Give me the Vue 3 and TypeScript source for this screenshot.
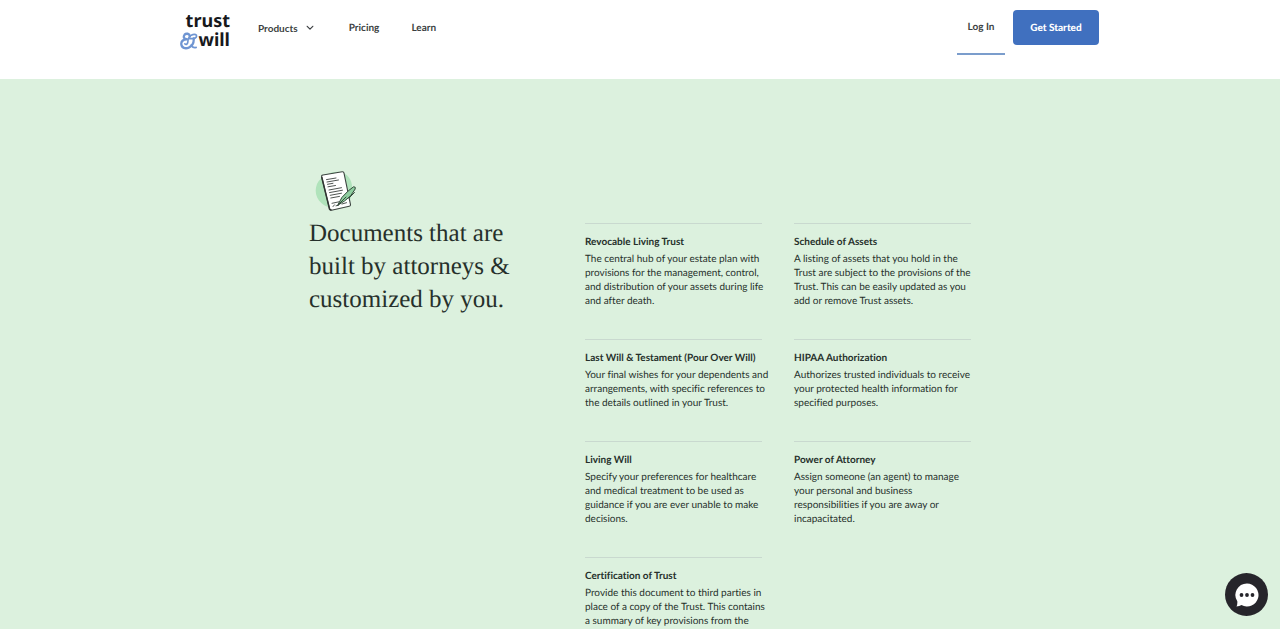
<script setup lang="ts">
interface DocumentItem {
  title: string
  lines: string[]
}

const documents: DocumentItem[] = [
  {
    title: 'Revocable Living Trust',
    lines: [
      'The central hub of your estate plan with',
      'provisions for the management, control,',
      'and distribution of your assets during life',
      'and after death.',
    ],
  },
  {
    title: 'Schedule of Assets',
    lines: [
      'A listing of assets that you hold in the',
      'Trust are subject to the provisions of the',
      'Trust. This can be easily updated as you',
      'add or remove Trust assets.',
    ],
  },
  {
    title: 'Last Will & Testament (Pour Over Will)',
    lines: [
      'Your final wishes for your dependents and',
      'arrangements, with specific references to',
      'the details outlined in your Trust.',
    ],
  },
  {
    title: 'HIPAA Authorization',
    lines: [
      'Authorizes trusted individuals to receive',
      'your protected health information for',
      'specified purposes.',
    ],
  },
  {
    title: 'Living Will',
    lines: [
      'Specify your preferences for healthcare',
      'and medical treatment to be used as',
      'guidance if you are ever unable to make',
      'decisions.',
    ],
  },
  {
    title: 'Power of Attorney',
    lines: [
      'Assign someone (an agent) to manage',
      'your personal and business',
      'responsibilities if you are away or',
      'incapacitated.',
    ],
  },
  {
    title: 'Certification of Trust',
    lines: [
      'Provide this document to third parties in',
      'place of a copy of the Trust. This contains',
      'a summary of key provisions from the',
    ],
  },
]
</script>

<template>
  <div class="page">
    <header class="header">
      <div class="bar">
        <a class="logo" href="#" aria-label="trust &amp; will">
          <span class="logo-top">trust</span>
          <span class="logo-bottom">
            <svg class="ampersand" viewBox="0 0 20 18" preserveAspectRatio="none" aria-hidden="true">
              <g fill="none" stroke="#6f95d2" stroke-linecap="round" stroke-linejoin="round">
                <path stroke-width="2.5" d="M11 4.600C10.600 1.500 6.800.9 5.100 2.700C3.200 4.900 4.600 7.300 7.600 7.300C3.200 7.300 1.200 9.600 1.400 12.100C1.700 15.900 6 17 9.700 15.600C13.500 14 15.600 10.500 15.200 6.500" />
                <path stroke-width="1.800" d="M5.400 11.900C7 13.200 8.900 11.600 8.800 9.300C8.700 6.200 11 3.400 14.200 2.600C16.500 2 18.800 2.600 18.400 4.300C18 6.300 14 6.900 10.600 6.500M12.500 13C13.800 15.400 15.500 16.200 18 15.400" />
              </g>
            </svg>
            <span>will</span>
          </span>
        </a>
        <nav class="nav" aria-label="Main">
          <button class="nav-item products" type="button">
            Products
            <svg class="chevron" viewBox="0 0 8 6" aria-hidden="true">
              <path d="M1.200 1.300L4 4.200L6.800 1.300" fill="none" stroke="#3c3f42" stroke-width="1.200" stroke-linecap="round" stroke-linejoin="round" />
            </svg>
          </button>
          <a class="nav-item" href="#">Pricing</a>
          <a class="nav-item" href="#">Learn</a>
        </nav>
        <div class="actions">
          <a class="login" href="#">Log In</a>
          <a class="start" href="#">Get Started</a>
        </div>
      </div>
    </header>

    <main class="section">
      <div class="content">
        <div class="intro">
          <svg class="paper" viewBox="0 0 42 42" aria-hidden="true">
            <path d="M2 14C6 6 16 1 25 2C33 3 38 11 37 20C37 31 31 38 20 38C7 38-3 27 2 14Z" fill="#b0e3bb" />
            <path d="M6.700 6.800Q6.200 5.300 7.900 5L27.200 1.800Q28.800 1.600 29 3.100L35.500 34.600Q35.700 36 34.200 36.300L16.500 40.200Q14.900 40.600 14.600 39.100Z" fill="#fff" stroke="#3d4541" stroke-width="1.100" stroke-linejoin="round" />
            <path d="M6.700 7L14.600 39.200L16.500 40.200" fill="none" stroke="#313633" stroke-width="1.500" />
            <g fill="none" stroke="#505653" stroke-width="1" stroke-linecap="round">
              <path d="M11.500 9.600L21 8M12 12L23.500 10M12.500 14.300L18 13.300M13 16.800L20.500 15.500M14 20L26.500 17.700M14.500 22.600L27.500 20.200M15.200 25.300L26.500 23.200M15.800 28L24.500 26.400" />
              <path d="M17 33.300L24 31.800M18 36.600L19.500 34.800M21 35.800L23.500 35.200M27 34L31.500 32.700" />
            </g>
            <path d="M22.500 35.500L27 27.300Q33.500 20 38.500 16.800Q41 16.500 40.200 19Q36.500 26.500 29.500 31Z" fill="#8fcfa0" stroke="#344a3b" stroke-width="1" stroke-linejoin="round" />
            <path d="M22.500 35.500L31 27M34 28L39.500 22.500" fill="none" stroke="#344a3b" stroke-width="1" stroke-linecap="round" />
          </svg>
          <h1 class="heading">Documents that are built by attorneys &amp; customized by you.</h1>
        </div>
        <div class="cards">
          <article v-for="item in documents" :key="item.title" class="card">
            <h2 class="card-title">{{ item.title }}</h2>
            <p class="card-text">{{ item.lines.join('\n') }}</p>
          </article>
        </div>
      </div>
    </main>

    <button class="chat" type="button" aria-label="Open chat">
      <svg class="bubble" viewBox="0 0 24 24" aria-hidden="true">
        <path d="M12 .5A11.500 11.500 0 1 1 6.500 22.100Q4.500 23.500 1.500 23.500Q2.600 21.500 2.300 18.300A11.500 11.500 0 0 1 12 .5Z" fill="#fff" />
        <g fill="#26252b">
          <circle cx="6.500" cy="12" r="1.900" />
          <circle cx="12" cy="12" r="1.900" />
          <circle cx="17.500" cy="12" r="1.900" />
        </g>
      </svg>
    </button>
  </div>
</template>

<style>
body {
  margin: 0;
}
</style>

<style scoped>
.page {
  height: 100vh;
  display: flex;
  flex-direction: column;
  overflow: hidden;
  background: #dcf1de;
  color: #26302b;
  font-family: Lato, "Liberation Sans", sans-serif;
  font-size: 10px;
  line-height: 14px;
  font-variant-ligatures: none;
  text-rendering: geometricPrecision;
}

.header {
  flex: none;
  height: 79px;
  background: #fff;
}

.bar {
  display: flex;
  align-items: flex-start;
  max-width: 918px;
  margin: 0 auto;
  padding-top: 10px;
}

.logo {
  display: flex;
  flex-direction: column;
  align-items: flex-end;
  width: 49px;
  padding-top: 2px;
  color: #17191c;
  font-family: "Noto Sans", sans-serif;
  font-size: 18px;
  font-weight: 700;
  line-height: 19px;
  text-decoration: none;
}

.logo-bottom {
  display: flex;
  align-items: center;
}

.ampersand {
  width: 18px;
  height: 18px;
}

.nav {
  display: flex;
  gap: 32px;
  margin-left: 28px;
  padding-top: 11px;
}

.nav-item {
  padding: 0;
  border: 0;
  background: none;
  color: #3c3f42;
  font: inherit;
  font-weight: 700;
  text-decoration: none;
}

.products {
  display: flex;
  align-items: center;
  gap: 8px;
  margin-right: 3px;
}

.chevron {
  width: 8px;
  height: 6px;
}

.actions {
  display: flex;
  align-items: flex-start;
  gap: 8px;
  margin-left: auto;
}

.login {
  width: 48px;
  padding: 10px 0 19px;
  border-bottom: 2px solid #7b9dcc;
  color: #3c3f42;
  font-weight: 700;
  text-align: center;
  text-decoration: none;
}

.start {
  width: 86px;
  padding: 11px 0 10px;
  border-radius: 4px;
  background: #4070bf;
  color: #fff;
  font-weight: 900;
  text-align: center;
  text-decoration: none;
}

.section {
  flex: 1;
  min-height: 0;
  padding: 91px 24px 0;
}

.content {
  display: grid;
  grid-template-columns: 276px 1fr;
  max-width: 662px;
  margin: 0 auto;
}

.paper {
  display: block;
  width: 42px;
  height: 42px;
  margin-left: 6px;
}

.heading {
  max-width: 216px;
  margin: 5px 0 0;
  font-family: "Liberation Serif", serif;
  font-size: 25px;
  font-weight: 400;
  line-height: 33px;
}

.cards {
  display: grid;
  grid-template-columns: repeat(2, minmax(0, 1fr));
  gap: 31px 32px;
  align-content: start;
  padding-top: 53px;
}

.card {
  padding-top: 11px;
  border-top: 1px solid #c9d9cf;
}

.card-title {
  margin: 0 0 3px;
  font-size: 10px;
  font-weight: 700;
  white-space: nowrap;
}

.card-text {
  margin: 0;
  white-space: pre;
}

.chat {
  position: fixed;
  right: 12px;
  bottom: 13px;
  display: flex;
  align-items: center;
  justify-content: center;
  width: 43px;
  height: 43px;
  padding: 0;
  border: 0;
  border-radius: 50%;
  background: #26252b;
}

.bubble {
  width: 24px;
  height: 24px;
}
</style>
